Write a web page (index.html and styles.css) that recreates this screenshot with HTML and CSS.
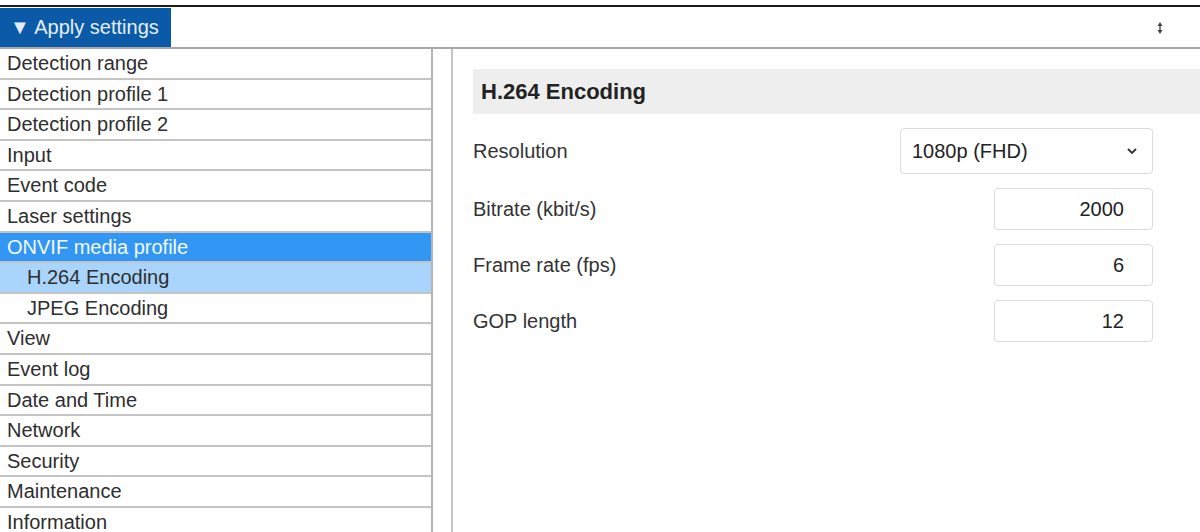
FILE: index.html
```html
<!DOCTYPE html>
<html lang="en">
<head>
  <meta charset="UTF-8">
  <meta name="viewport" content="width=device-width, initial-scale=1.0">
  <title>Settings</title>
  <link rel="stylesheet" href="styles.css">
</head>
<body>
  <!-- barra superior -->
  <header class="top-bar">
    <button class="apply-btn" type="button">&#9660; Apply settings</button>
    <span class="resize-icon">
      <svg width="6" height="14" viewBox="0 0 6 14">
        <path d="M3 1 L5.5 5 L0.5 5 Z M3 13 L5.5 9 L0.5 9 Z" fill="#444"/>
        <rect x="2.3" y="4" width="1.4" height="6" fill="#444"/>
      </svg>
    </span>
  </header>

  <div class="layout">
    <!-- menu lateral -->
    <ul class="menu">
      <li>Detection range</li>
      <li>Detection profile 1</li>
      <li>Detection profile 2</li>
      <li>Input</li>
      <li>Event code</li>
      <li>Laser settings</li>
      <li class="is-active">ONVIF media profile</li>
      <li class="sub is-current">H.264 Encoding</li>
      <li class="sub">JPEG Encoding</li>
      <li>View</li>
      <li>Event log</li>
      <li>Date and Time</li>
      <li>Network</li>
      <li>Security</li>
      <li>Maintenance</li>
      <li>Information</li>
    </ul>

    <!-- contenido -->
    <main class="panel">
      <h2 class="panel-title">H.264 Encoding</h2>
      <form class="settings-form">
        <div class="row">
          <label>Resolution</label>
          <div class="select-box">
            <span>1080p (FHD)</span>
            <svg width="12" height="8" viewBox="0 0 12 8"><path d="M2 2 L6 6 L10 2" fill="none" stroke="#333" stroke-width="1.8"/></svg>
          </div>
        </div>
        <div class="row">
          <label>Bitrate (kbit/s)</label>
          <input class="num" type="text" value="2000">
        </div>
        <div class="row">
          <label>Frame rate (fps)</label>
          <input class="num" type="text" value="6">
        </div>
        <div class="row">
          <label>GOP length</label>
          <input class="num" type="text" value="12">
        </div>
      </form>
    </main>
  </div>
</body>
</html>
```

FILE: styles.css
```css
/* base */
*{
  margin: 0;
  padding: 0;
  box-sizing: border-box;
}

body{
  font-family: "Liberation Sans", Arial, sans-serif;
  color: #2e2e2e;
  background: #fff;
  padding-top: 5px;
  overflow: hidden;
}

/* barra superior */
.top-bar{
  display: flex;
  align-items: center;
  justify-content: space-between;
  height: 44px;
  border-top: 2px solid #1c1c1c;
  border-bottom: 2px solid #a8a8a8;
  padding-top: 1px;
}

.apply-btn{
  height: 39px;
  width: 171px;
  border: none;
  background: #0b5aa8;
  color: #e4eefa;
  font-family: inherit;
  font-size: 20px;
  text-align: left;
  padding-left: 10px;
}

.resize-icon{
  margin-right: 37px;
  display: flex;
}

/* layout */
.layout{
  display: flex;
}

/* menu */
.menu{
  list-style: none;
  width: 433px;
  border-right: 2px solid #b5b5b5;
}

.menu li{
  height: 30.6px;
  line-height: 29px;
  border-bottom: 2px solid #c4c4c4;
  font-size: 20px;
  padding-left: 7px;
  white-space: nowrap;
}

.menu li.sub{
  padding-left: 27px;
}

.menu li.is-active{
  background: #3297f4;
  color: #f4f9ff;
}

.menu li.is-current{
  background: #a9d4fb;
}

/* panel derecho */
.panel{
  flex: 1;
  margin-left: 18px;
  border-left: 2px solid #c4c4c4;
  padding: 20px 0 0 20px;
}

.panel-title{
  background: #eeeeee;
  height: 45px;
  line-height: 45px;
  padding-left: 8px;
  font-size: 22px;
  font-weight: bold;
  color: #222;
}

.settings-form{
  width: 680px;
  margin-top: 14px;
}

.row{
  display: flex;
  align-items: center;
  justify-content: space-between;
  margin-bottom: 14px;
}

.row label{
  font-size: 20px;
  color: #333;
}

.select-box{
  width: 253px;
  height: 46px;
  border: 1px solid #dcdcdc;
  border-radius: 4px;
  display: flex;
  align-items: center;
  justify-content: space-between;
  padding: 0 14px 0 11px;
  font-size: 20px;
  color: #222;
}

.num{
  width: 159px;
  height: 42px;
  border: 1px solid #dcdcdc;
  border-radius: 4px;
  font-family: inherit;
  font-size: 20px;
  color: #222;
  text-align: right;
  padding-right: 28px;
  outline: none;
}
```
